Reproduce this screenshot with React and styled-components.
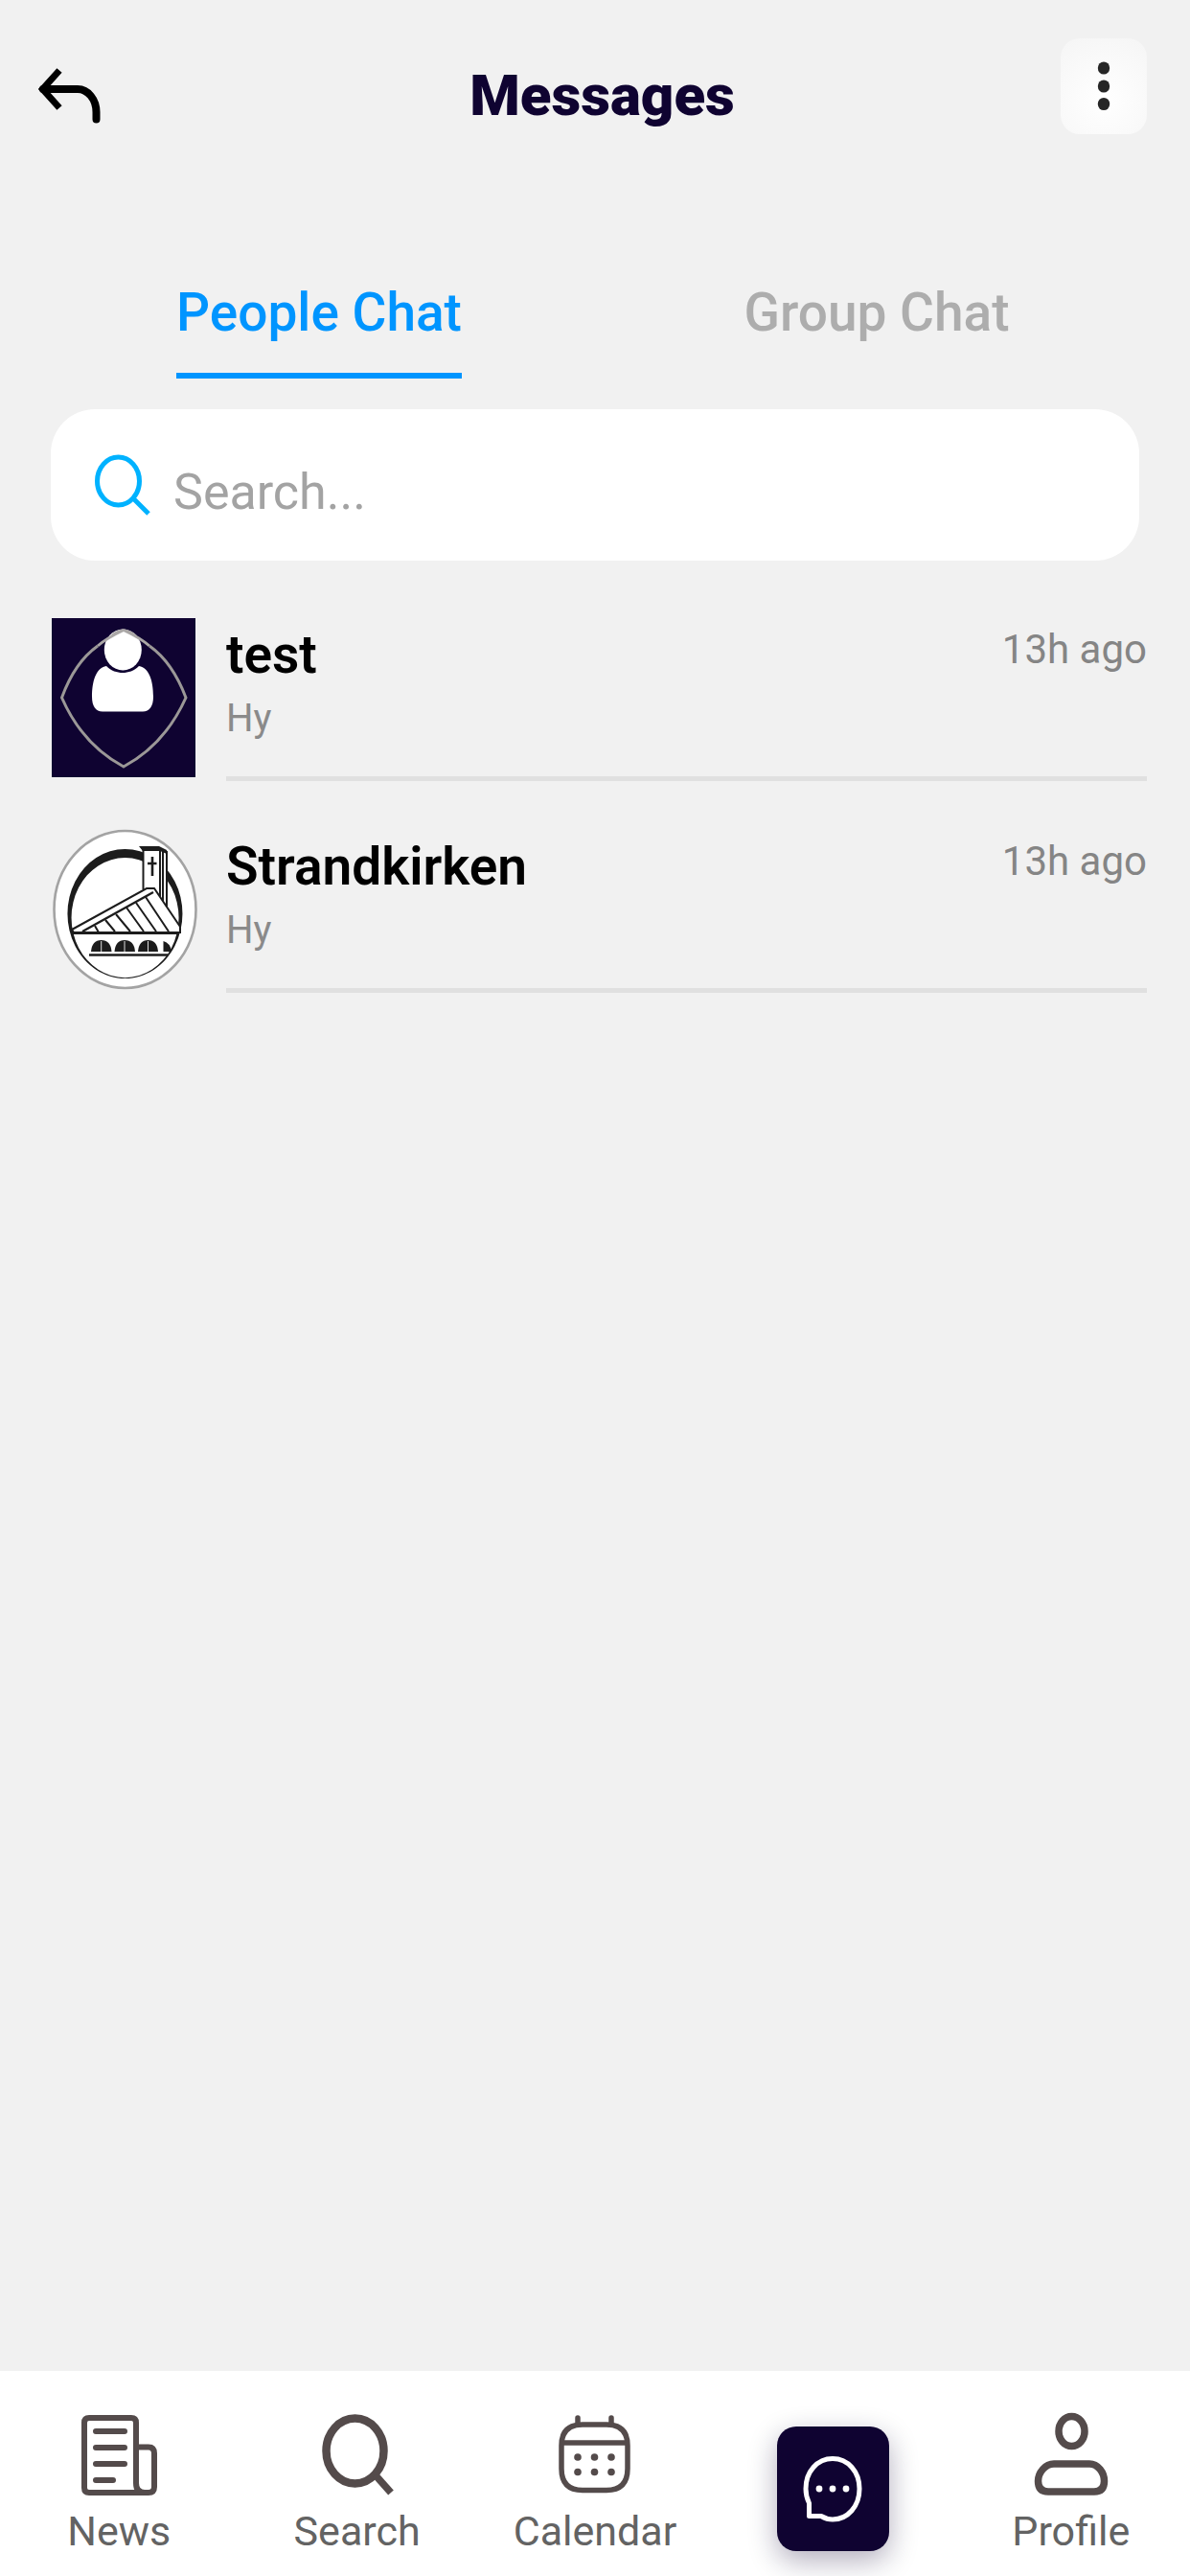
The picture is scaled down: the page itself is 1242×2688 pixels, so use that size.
import React, { useState } from "react";
import styled, { createGlobalStyle } from "styled-components";

const navy = "#0f0331";
const iconGrey = "#544b4b";

const GlobalStyle = createGlobalStyle`
  *, *::before, *::after { box-sizing: border-box; }
  body {
    margin: 0;
    background: #f1f1f1;
    font-family: Roboto, "Liberation Sans", sans-serif;
  }
  button { font: inherit; border: 0; padding: 0; background: none; cursor: pointer; }
  svg { display: block; overflow: visible; }
`;

const Page = styled.div`
  min-height: 100vh;
  display: flex;
  flex-direction: column;
`;

const Header = styled.header`
  display: grid;
  grid-template-columns: 1fr auto 1fr;
  align-items: center;
  min-height: 160px;
  padding: 40px 45px 0 60px;
`;

const BackButton = styled.button`
  justify-self: start;
  margin-left: -20px;
`;

const Title = styled.h1`
  margin: 0;
  color: ${navy};
  font-size: 60px;
  line-height: 72px;
  font-weight: 900;
`;

const MenuButton = styled.button`
  align-self: start;
  justify-self: end;
  display: grid;
  place-items: center;
  width: 90px;
  height: 100px;
  border-radius: 20px;
  background: radial-gradient(circle at 50% 65%, #ffffff, #f5f5f5);
`;

const Main = styled.main`
  flex: 1;
`;

const Tabs = styled.div`
  display: grid;
  grid-template-columns: 1fr 1fr;
  justify-items: center;
  margin-top: 131px;
  padding: 0 36px 0 42px;
`;

const Tab = styled.button`
  padding-bottom: 28px;
  border-bottom: 6px solid ${(p) => (p.$active ? "#0095ff" : "transparent")};
  color: ${(p) => (p.$active ? "#0095ff" : "#adadad")};
  font-size: 55px;
  line-height: 70px;
  font-weight: 500;
`;

const SearchBox = styled.label`
  display: flex;
  align-items: center;
  gap: 24px;
  height: 158px;
  margin: 32px 53px 0;
  padding: 0 46px;
  border-radius: 46px;
  background: #ffffff;
`;

const SearchInput = styled.input`
  flex: 1;
  min-width: 0;
  padding: 16px 0 0;
  border: 0;
  outline: 0;
  background: transparent;
  color: #333333;
  font-family: inherit;
  font-size: 52px;
  line-height: 64px;
  &::placeholder { color: #a3a3a3; opacity: 1; }
`;

const ChatList = styled.ul`
  list-style: none;
  display: flex;
  flex-direction: column;
  gap: 51px;
  margin: 60px 0 0;
  padding: 0 45px 0 54px;
`;

const ChatRow = styled.li`
  display: flex;
  gap: 32px;
`;

const ChatBody = styled.div`
  flex: 1;
  display: flex;
  justify-content: space-between;
  min-height: 170px;
  padding-top: 6px;
  border-bottom: 5px solid #e0e0e0;
`;

const ChatText = styled.div`
  display: flex;
  flex-direction: column;
  gap: 10px;
`;

const ChatName = styled.h2`
  margin: 0;
  color: #000000;
  font-size: 55px;
  line-height: 64px;
  font-weight: 600;
`;

const ChatPreview = styled.p`
  margin: 0;
  color: #8a8a8a;
  font-size: 40px;
  line-height: 50px;
`;

const ChatTime = styled.time`
  color: #858585;
  font-size: 42px;
  line-height: 54px;
`;

const Nav = styled.nav`
  display: grid;
  grid-template-columns: repeat(5, 1fr);
  justify-items: center;
  background: #ffffff;
`;

const NavItem = styled.a`
  display: flex;
  flex-direction: column;
  align-items: center;
  gap: 11px;
  padding: 45px 0 22px;
  color: #636363;
  font-size: 43px;
  line-height: 50px;
  text-decoration: none;
`;

const NavActive = styled.a`
  align-self: end;
  display: grid;
  place-items: center;
  width: 117px;
  height: 130px;
  margin-bottom: 26px;
  border-radius: 20px;
  background: ${navy};
  box-shadow: 0 10px 30px rgba(15, 3, 49, 0.32);
`;

const BackIcon = () => (
  <svg width="64" height="58" viewBox="0 0 64 58" fill="none" stroke="#000" strokeWidth="8">
    <path d="M22 2.5 4.5 22 22 41.500" strokeWidth="7" />
    <path d="M5 22H41C52 22 60.500 33 60.500 46V53.500" strokeLinecap="round" />
  </svg>
);

const DotsIcon = () => (
  <svg width="14" height="52" viewBox="0 0 14 52" fill="#262626">
    <ellipse cx="7" cy="7" rx="6.2" ry="6.6" />
    <ellipse cx="7" cy="26" rx="6.2" ry="6.6" />
    <ellipse cx="7" cy="44.500" rx="6.2" ry="6.6" />
  </svg>
);

const FieldSearchIcon = () => (
  <svg width="58" height="64" viewBox="0 0 58 64" fill="none" stroke="#00b2ff" strokeWidth="5">
    <ellipse cx="24.500" cy="28" rx="22" ry="25" />
    <path d="M40 46 56 62" />
  </svg>
);

const PersonAvatar = () => (
  <svg width="150" height="166" viewBox="0 0 150 166" role="img" aria-label="test">
    <rect width="150" height="166" fill={navy} />
    <path d="M57 50C46 52 42 66 42 82C42 92 46 97.500 53 97.500H95C102 97.500 106 92 106 82C106 66 102 52 91 50C86 55 80 57 74 57C68 57 62 55 57 50Z" fill="#fff" />
    <ellipse cx="74.300" cy="33" rx="19.500" ry="21.500" fill="#fff" />
    <path d="M75 12.500Q57 21 48 29" fill="none" stroke="#aaa7a6" strokeWidth="3" />
    <path d="M75 12.500Q93 21 102 29" fill="none" stroke="#aaa7a6" strokeWidth="3" />
    <path d="M61 18Q75 5 89 18L75 13Z" fill="#aaa7a6" />
    <path d="M48 29Q24 46 10.500 83Q32 132 75 155Q118 132 140 83Q126 46 102 29" fill="none" stroke="#9b9897" strokeWidth="3" />
  </svg>
);

const ChurchAvatar = () => (
  <svg width="150" height="166" viewBox="0 0 150 166" role="img" aria-label="Strandkirken">
    <ellipse cx="76.500" cy="83" rx="74" ry="82" fill="#fff" stroke="#a3a3a3" strokeWidth="2.6" />
    <path fillRule="evenodd" fill="#1c1c1c" d="M76.500 20A60 67.500 0 1 1 76.400 20ZM76.500 29A56 62.600 0 1 0 76.600 29Z" />
    <path d="M95 22 112 19 120 22V80L107 64 95 62Z" fill="#fff" />
    <path d="M91 17H112L120 21V25L113 22H95Z" fill="#1c1c1c" />
    <g fill="none" stroke="#1c1c1c" strokeWidth="2">
      <path d="M95.500 20V62M113 20V70M116 22V74M120 22V80" />
      <path d="M105 28V48M100 35H109.500" strokeWidth="2.6" />
      <path d="M21 104 99 61H107L134 101V107H23Z" fill="#fff" />
      <path d="M32 106 106 65" strokeWidth="2.4" />
      <path d="M45 100 49 107M56 94 66 106M67 88 82 106M78 81 96 106M88 76 109 106M98 70 122 106" />
      <path d="M22 107.500H133" strokeWidth="3" />
      <path d="M39 130.500H121" strokeWidth="2.6" />
    </g>
    <g fill="#1c1c1c">
      <path d="M41 127Q42 115 51.700 115Q61.500 115 62.500 127Z" />
      <path d="M65.500 127Q66.500 115 76 115Q86 115 87 127Z" />
      <path d="M90 127Q91 115 100.500 115Q110 115 111 127Z" />
      <path d="M116.500 127V116Q124 118 125 127Z" />
    </g>
    <path d="M51.700 116V127M76 116V127M100.500 116V127" stroke="#ddd" strokeWidth="1" />
  </svg>
);

const NewsIcon = () => (
  <svg width="79" height="86" viewBox="0 0 79 86" fill="none" stroke={iconGrey} strokeWidth="6" strokeLinecap="round">
    <path d="M69 82H8Q3 82 3 77V9Q3 4 8 4H52Q57 4 57 9V72Q57 82 66 82H70Q76 82 76 76V41Q76 34.500 70 34.500H58" />
    <path d="M15 18H45M15 35H45M15 52H45M15 69H33" />
  </svg>
);

const NavSearchIcon = () => (
  <svg width="74" height="86" viewBox="0 0 74 86" fill="none" stroke={iconGrey} strokeWidth="8.5">
    <ellipse cx="34.500" cy="38.500" rx="30" ry="34" />
    <path d="M56 64 72 82" strokeWidth="7.500" />
  </svg>
);

const CalendarIcon = () => (
  <svg width="75" height="86" viewBox="0 0 75 86" fill="none" stroke={iconGrey} strokeWidth="5.5">
    <path d="M37.500 11H50Q72 11 72 33V57Q72 79.500 50 79.500H25Q3 79.500 3 57V33Q3 11 25 11Z" />
    <path d="M3 30H72" />
    <path d="M20 4V10M55 4V10" strokeLinecap="round" />
    <g fill={iconGrey} stroke="none">
      {[20, 37.5, 55].map((x) =>
        [45, 60.5].map((y) => <circle key={`${x}-${y}`} cx={x} cy={y} r="3.800" />)
      )}
    </g>
  </svg>
);

const ChatIcon = () => (
  <svg width="62" height="70" viewBox="0 0 62 70" fill="none" stroke="#fff" strokeWidth="5" strokeLinejoin="round">
    <path d="M6.500 63.500V50Q3 43 3 35C3 17 15 3.500 31 3.500S59 17 59 35S47 67 31 67Q25 67 19 63.500Z" />
    <g fill="#fff" stroke="none">
      <circle cx="17" cy="35" r="3.400" />
      <circle cx="31" cy="35" r="3.400" />
      <circle cx="45" cy="35" r="3.400" />
    </g>
  </svg>
);

const ProfileIcon = () => (
  <svg width="76" height="86" viewBox="0 0 76 86" fill="none" stroke={iconGrey} strokeWidth="7.5">
    <ellipse cx="38.500" cy="18" rx="13.500" ry="15.500" />
    <path d="M20 52H57C66 52 72.500 61 72.500 70Q72.500 81 62 81H14Q3.500 81 3.500 70C3.500 61 11 52 20 52Z" />
  </svg>
);

const chats = [
  { name: "test", preview: "Hy", time: "13h ago", Avatar: PersonAvatar },
  { name: "Strandkirken", preview: "Hy", time: "13h ago", Avatar: ChurchAvatar },
];

const tabs = ["People Chat", "Group Chat"];

export default function App() {
  const [tab, setTab] = useState(tabs[0]);
  return (
    <Page>
      <GlobalStyle />
      <Header>
        <BackButton aria-label="Back"><BackIcon /></BackButton>
        <Title>Messages</Title>
        <MenuButton aria-label="More options"><DotsIcon /></MenuButton>
      </Header>
      <Main>
        <Tabs role="tablist">
          {tabs.map((name) => (
            <Tab key={name} role="tab" aria-selected={tab === name} $active={tab === name} onClick={() => setTab(name)}>
              {name}
            </Tab>
          ))}
        </Tabs>
        <SearchBox>
          <FieldSearchIcon />
          <SearchInput type="text" placeholder="Search..." aria-label="Search" />
        </SearchBox>
        <ChatList>
          {chats.map(({ name, preview, time, Avatar }) => (
            <ChatRow key={name}>
              <Avatar />
              <ChatBody>
                <ChatText>
                  <ChatName>{name}</ChatName>
                  <ChatPreview>{preview}</ChatPreview>
                </ChatText>
                <ChatTime>{time}</ChatTime>
              </ChatBody>
            </ChatRow>
          ))}
        </ChatList>
      </Main>
      <Nav>
        <NavItem href="#news"><NewsIcon />News</NavItem>
        <NavItem href="#search"><NavSearchIcon />Search</NavItem>
        <NavItem href="#calendar"><CalendarIcon />Calendar</NavItem>
        <NavActive href="#messages" aria-label="Messages" aria-current="page"><ChatIcon /></NavActive>
        <NavItem href="#profile"><ProfileIcon />Profile</NavItem>
      </Nav>
    </Page>
  );
}
